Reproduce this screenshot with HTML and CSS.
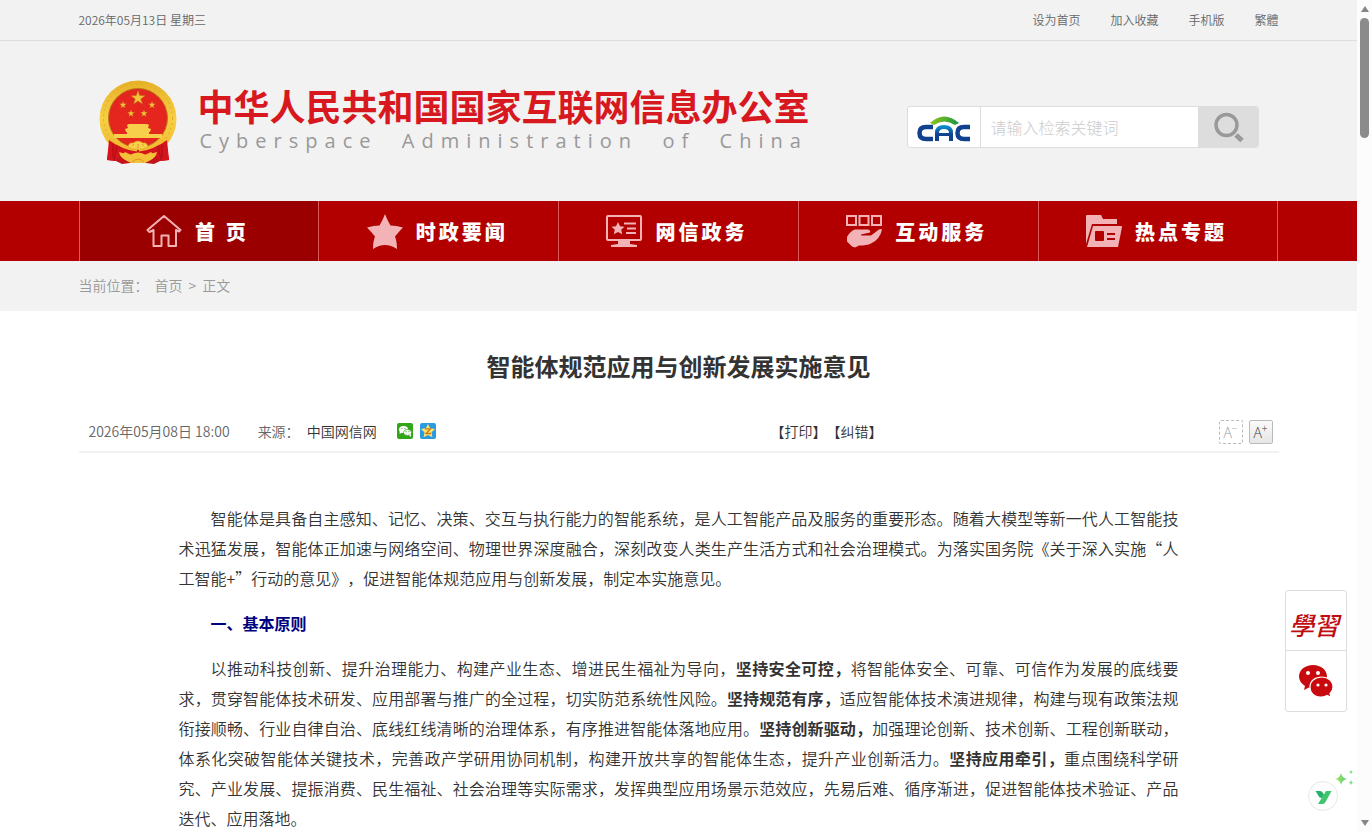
FILE: index.html
```html
<!DOCTYPE html>
<html lang="zh-CN">
<head>
<meta charset="utf-8">
<title>智能体规范应用与创新发展实施意见</title>
<meta name="viewport" content="width=device-width, initial-scale=1">
<link rel="stylesheet" href="styles.css">
</head>
<body>
<div class="window">
<div class="page">
  <div class="topbar">
    <div class="container topbar-row">
      <span>2026年05月13日 星期三</span>
      <div class="topbar-links">
        <a href="#">设为首页</a>
        <a href="#">加入收藏</a>
        <a href="#">手机版</a>
        <a href="#" lang="zh-TW">繁體</a>
      </div>
    </div>
  </div>

  <header class="header container">
    <a class="brand" href="#">
      <svg class="emblem" viewBox="0 0 78 84" aria-hidden="true">
        <defs>
          <linearGradient id="gold" x1="0" y1="0" x2="0" y2="1">
            <stop offset="0" stop-color="#e6b127"/><stop offset=".5" stop-color="#f7cf45"/><stop offset="1" stop-color="#efb82c"/>
          </linearGradient>
          <path id="star" d="M0-10 2.3-3.2 9.5-3.1 3.7 1.2 5.9 8.1 0 4-5.9 8.1-3.7 1.2-9.5-3.1-2.3-3.2z"/>
        </defs>
        <path d="M12 54 8 80l9 1 6 3 16-2 16 2 6-3 9-1-4-26z" fill="#c3121b"/>
        <circle cx="39" cy="39" r="38.500" fill="url(#gold)"/>
        <circle cx="39" cy="38" r="34.500" fill="none" stroke="#e2aa28" stroke-width="1" stroke-dasharray="2 3"/>
        <circle cx="39" cy="38" r="29.500" fill="#e4261f" stroke="#b9781a" stroke-width="1"/>
        <g fill="#f4c33b" stroke="#b86c16" stroke-width=".6">
          <use href="#star" transform="translate(39 18) scale(.75)"/>
          <use href="#star" transform="translate(24 25) scale(.37)"/>
          <use href="#star" transform="translate(53 25) scale(.37)"/>
          <use href="#star" transform="translate(32 33.500) scale(.37)"/>
          <use href="#star" transform="translate(45 33.500) scale(.37)"/>
        </g>
        <g fill="#f8cf4b">
          <path d="m28 45 2-1h18l2 1-1 3H29z"/>
          <path d="m26 49 3-1h20l3 1-1 3H27z"/>
          <path d="M28 52h22v2h13v4H15v-4h13z"/>
        </g>
        <path d="M10 60q11 9 29 10 18-1 29-10l2 20-9 1-9-9-13 6-13-6-9 9-9-1z" fill="#d5141b"/>
        <path d="M14 59q8 9 24 11M64 59q-8 9-24 11" stroke="#f2bd32" stroke-width="3" fill="none"/>
        <path d="M29 67q1-5 5-4 5-4 10 0 4-1 5 4-5 3-10 2-5 1-10-2z" fill="#f9d04a" stroke="#d98c1c" stroke-width=".5"/>
        <path d="M20 72q6 2 11 3 8-5 16 0 5-1 11-3-1 6-8 9l-4 2H32l-4-2q-7-3-8-9z" fill="#f4c23a"/>
        <path d="M33 82q6-6 12 0M33 66l2-2m4 4v-4m6 2-2-2" fill="none" stroke="#d38b1b" stroke-width=".8"/>
        <path d="M14 64v14m4-12-3 14m48-16v14m-4-12 3 14" stroke="#8d0c12" fill="none" opacity=".6"/>
      </svg>
      <span class="brand-text">
        <span class="brand-cn">中华人民共和国国家互联网信息办公室</span>
        <span class="brand-en" lang="en">Cyberspace&nbsp; Administration&nbsp; of&nbsp; China</span>
      </span>
    </a>
    <form class="search">
      <span class="search-logo">
        <svg viewBox="0 0 54 26" width="54" height="26" role="img" aria-label="CAC">
          <defs>
            <linearGradient id="arc"><stop offset="0" stop-color="#8cc220"/><stop offset=".5" stop-color="#5bb02c"/><stop offset="1" stop-color="#16944a"/></linearGradient>
            <linearGradient id="blue" x1="0" y1="0" x2="0" y2="1"><stop offset="0" stop-color="#0b9bd8"/><stop offset=".6" stop-color="#10418f"/></linearGradient>
          </defs>
          <path d="M13 7q14-13 29 0l-4 2q-11-7-21 0z" fill="url(#arc)"/>
          <path d="M16 11H9q-6.500 0-6.500 6T9 23h7" fill="none" stroke="#10418f" stroke-width="4.500"/>
          <path d="M53 11h-6q-6.500 0-6.500 6t6.500 6h6" fill="none" stroke="#10418f" stroke-width="4.500"/>
          <path d="M18 25v-8q0-8 9-8t9 8v8h-4v-5H22v5zm4-8h10q0-4-5-4t-5 4z" fill="url(#blue)" fill-rule="evenodd"/>
        </svg>
      </span>
      <input type="text" class="search-input" placeholder="请输入检索关键词" aria-label="请输入检索关键词">
      <button type="button" class="search-button" aria-label="搜索">
        <svg viewBox="0 0 32 32" width="32" height="32"><circle cx="14.500" cy="14" r="10.500" fill="none" stroke="#999" stroke-width="3.500"/><path d="m24 24 6 5.500" stroke="#999" stroke-width="5"/></svg>
      </button>
    </form>
  </header>

  <nav class="nav">
    <div class="container nav-row">
      <a class="nav-item active" href="#">
        <svg class="nav-icon" viewBox="0 0 36 36"><path d="M1.500 17 18 3l16.500 14-1.500 1.500-3-1.500V33h-7.500V22.500h-7V33H7.500V17l-4 2z" fill="none" stroke="#f3b3b6" stroke-width="2" stroke-linejoin="round"/></svg>
        <span>首 页</span>
      </a>
      <a class="nav-item" href="#">
        <svg class="nav-icon" viewBox="0 0 36 36"><path d="M18 1c1.500 4 3.500 8 5.500 11.500 4 .2 8 .8 12.500 2-3 3-5.500 6-8 9 1.500 4 2 8 2 12.500-4-2.500-8-4-12-4s-8 1.500-12 4c0-4.500.5-8.500 2-12.500-2.500-3-5-6-8-9 4.500-1.200 8.500-1.800 12.500-2C14.500 9 16.500 5 18 1z" fill="#f3b3b6"/></svg>
        <span>时政要闻</span>
      </a>
      <a class="nav-item" href="#">
        <svg class="nav-icon" viewBox="0 0 36 36"><rect x="1" y="3" width="34" height="24" rx="1" fill="none" stroke="#f3b3b6" stroke-width="2"/><path d="M12 27h12v4l7 1v2H5v-2l7-1zM12 9l2 4.200 4.500.500-3.300 3 1 4.500L12 19l-4.200 2.200 1-4.500-3.300-3 4.500-.5z" fill="#f3b3b6"/><path d="M18 10.500h12M21 15.500h9M20 20h10" stroke="#f3b3b6" stroke-width="2"/></svg>
        <span>网信政务</span>
      </a>
      <a class="nav-item" href="#">
        <svg class="nav-icon" viewBox="0 0 36 36"><path d="M1 3h9v9H1zM13.500 3h9v9h-9zM26 3h9v9h-9z" fill="none" stroke="#f3b3b6" stroke-width="2"/><path d="M1 24q3-6 8-7.500h13q3 1 2 3l-9 2v1h10l8-6q2-1 3 0-2 10-11 14-4 2-12 2l-4 2-3-1-5-5z" fill="#f3b3b6"/></svg>
        <span>互动服务</span>
      </a>
      <a class="nav-item" href="#">
        <svg class="nav-icon" viewBox="0 0 36 36"><path d="M0 3q0-1 1-1h14l2 4h14v5H6L0 31zM7 13h28q1 0 1 1l-4 20H1zM9 19v8q0 1 1 1h7q1 0 1-1v-8q0-1-1-1h-7q-1 0-1 1zM21 20v2h8v-2zM21 25v2h8v-2z" fill="#f3b3b6" fill-rule="evenodd"/></svg>
        <span>热点专题</span>
      </a>
    </div>
  </nav>

  <div class="crumbs">
    <div class="container crumbs-row">
      <span>当前位置：</span><a href="#">首页</a><span>&gt;</span><a href="#">正文</a>
    </div>
  </div>

  <main class="container">
    <h1 class="title">智能体规范应用与创新发展实施意见</h1>
    <div class="meta">
      <div class="meta-left">
        <span>2026年05月08日 18:00</span>
        <span class="source">来源： <a href="#">中国网信网</a></span>
        <span class="share">
          <button type="button" aria-label="微信">
            <svg viewBox="0 0 16 16" width="16" height="16"><rect width="16" height="16" rx="2" fill="#32a518"/><ellipse cx="6.500" cy="6.500" rx="4.500" ry="3.500" fill="#fff"/><path d="m3 8-.5 3L6 9z" fill="#fff"/><ellipse cx="10.500" cy="9.500" rx="4" ry="3" fill="#fff" stroke="#32a518" stroke-width=".7"/><path d="m12 12 2 2v-3z" fill="#fff"/><path d="M4.500 5.500h1m2 0h1m0 3.200h1m2 0h1" stroke="#32a518"/></svg>
          </button>
          <button type="button" aria-label="QQ空间">
            <svg viewBox="0 0 16 16" width="16" height="16"><rect width="16" height="16" rx="2" fill="#2b9be0"/><path d="m8 1 2.100 4.300 5 .700-3.600 3.300.9 4.900L8 12l-4.400 2.200.9-4.900L.9 6l5-.7z" fill="#ffe36b"/><path d="M5 5.800h5.500L6 10.500h5" fill="none" stroke="#d07a12" stroke-width="1.300"/></svg>
          </button>
        </span>
      </div>
      <div class="meta-actions"><a href="#">【打印】</a><a href="#">【纠错】</a></div>
      <div class="zoomers">
        <button type="button" class="size-button off">A<sup>−</sup></button>
        <button type="button" class="size-button">A<sup>+</sup></button>
      </div>
    </div>
    <article class="article">
      <p>智能体是具备自主感知、记忆、决策、交互与执行能力的智能系统，是人工智能产品及服务的重要形态。随着大模型等新一代人工智能技术迅猛发展，智能体正加速与网络空间、物理世界深度融合，深刻改变人类生产生活方式和社会治理模式。为落实国务院《关于深入实施“人工智能+”行动的意见》，促进智能体规范应用与创新发展，制定本实施意见。</p>
      <h2>一、基本原则</h2>
      <p>以推动科技创新、提升治理能力、构建产业生态、增进民生福祉为导向，<strong>坚持安全可控，</strong>将智能体安全、可靠、可信作为发展的底线要求，贯穿智能体技术研发、应用部署与推广的全过程，切实防范系统性风险。<strong>坚持规范有序，</strong>适应智能体技术演进规律，构建与现有政策法规衔接顺畅、行业自律自治、底线红线清晰的治理体系，有序推进智能体落地应用。<strong>坚持创新驱动，</strong>加强理论创新、技术创新、工程创新联动，体系化突破智能体关键技术，完善政产学研用协同机制，构建开放共享的智能体生态，提升产业创新活力。<strong>坚持应用牵引，</strong>重点围绕科学研究、产业发展、提振消费、民生福祉、社会治理等实际需求，发挥典型应用场景示范效应，先易后难、循序渐进，促进智能体技术验证、产品迭代、应用落地。</p>
    </article>
  </main>
</div>

<div class="scrollbar" aria-hidden="true">
  <span class="arrow up"></span>
  <span class="thumb"></span>
  <span class="arrow down"></span>
</div>
</div>

<aside class="floating">
  <a class="study" href="#" lang="zh-TW">學習</a>
  <a href="#" aria-label="微信">
    <svg viewBox="0 0 34 32" width="34" height="32"><path d="M14 0c8 0 14 5 14 11.500S22 23 14 23l-4-.5L5 25l1-4Q0 17 0 11.500C0 5 6 0 14 0z" fill="#c80a0f"/><path d="M23 12c6 0 11 4 11 10 0 3-1 5-3 6.500l1 3.500-4-1.500c-8 4-17 0-17-8.500 0-6 5-10 12-10z" fill="#c80a0f" stroke="#fff" stroke-width="1.200"/><g fill="#fff"><circle cx="9" cy="8" r="2"/><circle cx="19" cy="8" r="2"/><circle cx="19" cy="20" r="1.600"/><circle cx="27" cy="20" r="1.600"/></g></svg>
  </a>
</aside>

<button class="assistant" type="button" aria-label="助手">
  <svg viewBox="0 0 48 48" width="48" height="48"><defs><linearGradient id="spark"><stop offset="0" stop-color="#b5e36c"/><stop offset="1" stop-color="#4fcf70"/></linearGradient></defs><circle cx="17" cy="29" r="14.500" fill="#fff" stroke="#e6e6e6"/><path d="M9.500 24H14q2 0 3 2l1 2-2 3q-3 0-4-3z" fill="#27b06b"/><path d="M20 24h5.500l-6 11q-1 2-3 2H12z" fill="#3fc56b"/><path d="M35 6q1 5 6 6-5 1-6 6-1-5-6-6 5-1 6-6z" fill="url(#spark)"/><path d="M45 13q.5 2 2 2.500-1.500.5-2 2.500-.5-2-2-2.500 1.500-.5 2-2.500zM45 3q.5 2 2 2-1.500.5-2 2-.5-1.500-2-2 1.500 0 2-2z" fill="#7bdc86"/></svg>
</button>
</body>
</html>
```

FILE: styles.css
```css
* { box-sizing: border-box; }

body {
  margin: 0;
  color: #333;
  background: #fff;
  font-family: "Noto Sans CJK SC", "Noto Sans", sans-serif;
  font-size: 14px;
  font-weight: 350;
  text-spacing-trim: space-all;
}

a { color: inherit; text-decoration: none; }
button { padding: 0; border: 0; background: none; font: inherit; cursor: pointer; }
svg { display: block; }

.window { display: flex; height: 100vh; overflow: hidden; }
.page {
  flex: 1;
  min-width: 0;
  overflow: hidden;
  background: linear-gradient(#f2f2f2 310px, #fff 310px);
}
.container { width: 100%; max-width: 1200px; margin: 0 auto; }

/* Top strip */
.topbar {
  background: #f2f2f2;
  border-bottom: 1px solid #ddd;
  color: #666;
  font-size: 12px;
  line-height: 40px;
}
.topbar-row { display: flex; justify-content: space-between; }
.topbar-links { display: flex; gap: 30px; }

/* Header */
.header {
  display: flex;
  align-items: center;
  justify-content: space-between;
  height: 160px;
  padding: 2px 20px 0;
}
.brand { display: flex; align-items: center; gap: 21px; white-space: nowrap; }
.emblem { width: 78px; height: 84px; }
.brand-text { display: flex; flex-direction: column; padding-bottom: 4px; }
.brand-cn { color: #d7191f; font-size: 36px; font-weight: 700; line-height: 40px; }
.brand-en {
  padding: 2px 0 0 2px;
  color: #999;
  font-family: "Open Sans", sans-serif;
  font-size: 20px;
  font-weight: 400;
  line-height: 28px;
  letter-spacing: 7px;
}

.search {
  display: flex;
  width: 352px;
  height: 42px;
  margin-top: 10px;
  overflow: hidden;
  background: #fff;
  border: 1px solid #ddd;
  border-radius: 3px;
}
.search-logo {
  display: flex;
  align-items: center;
  justify-content: center;
  width: 73px;
  padding-top: 4px;
  border-right: 1px solid #ddd;
}
.search-input {
  flex: 1;
  min-width: 0;
  padding: 0 10px;
  border: 0;
  outline: 0;
  color: #333;
  font: inherit;
  font-size: 16px;
  font-weight: 300;
}
.search-input::placeholder { color: #ccc; opacity: 1; }
.search-button {
  display: flex;
  align-items: center;
  justify-content: center;
  width: 60px;
  background: #ddd;
}

/* Navigation */
.nav { background: #b20000; }
.nav-row { display: flex; border-left: 1px solid #dc5a5a; }
.nav-item {
  display: flex;
  flex: 1;
  align-items: center;
  justify-content: center;
  gap: 13px;
  height: 60px;
  padding-right: 3px;
  border-right: 1px solid #dc5a5a;
  color: #fff;
  font-size: 20px;
  font-weight: 900;
  letter-spacing: 3px;
  white-space: nowrap;
}
.nav-item.active { background: #9b0000; }
.nav-icon { width: 36px; height: 36px; }

.crumbs { padding-bottom: 2px; color: #999; line-height: 48px; background: #f2f2f2; }
.crumbs-row { display: flex; gap: 6px; }

/* Article head */
.title {
  margin: 0;
  padding: 37px 0 26px;
  font-size: 24px;
  font-weight: 700;
  line-height: 36px;
  text-align: center;
}
.meta {
  display: grid;
  grid-template-columns: 58% 1fr auto;
  align-items: center;
  height: 43px;
  border-bottom: 2px solid #f2f2f2;
}
.meta-left { display: flex; align-items: center; gap: 28px; padding-left: 10px; color: #666; }
.source a { margin-left: 4px; color: #333; }
.share { display: flex; gap: 7px; margin-left: -8px; }
.meta-actions { margin-left: -4px; }
.zoomers { display: flex; gap: 6px; padding: 3px 6px 0 0; }
.size-button {
  display: flex;
  align-items: center;
  justify-content: center;
  width: 24px;
  height: 24px;
  border: 1px solid #bbb;
  border-radius: 2px;
  background: linear-gradient(#fafafa, #e6e6e6);
  color: #333;
  font-family: "Open Sans", sans-serif;
  font-size: 14px;
}
.size-button sup { padding-bottom: 8px; font-size: 10px; line-height: 1; }
.size-button.off { border-style: dashed; background: #fff; color: #999; }

.article {
  padding: 50px 100px 0;
  font-size: 16px;
  line-height: 30px;
  text-align: justify;
}
.article p, .article h2 { margin: 0 0 15px; text-indent: 2em; }
.article h2 { color: #000080; font-size: 16px; font-weight: 700; }

/* Window scrollbar */
.scrollbar {
  display: flex;
  flex: none;
  flex-direction: column;
  align-items: center;
  gap: 6px;
  width: 15px;
  padding: 6px 0 6px;
  background: #fcfcfc;
}
.arrow { border: 4px solid transparent; }
.arrow.up { border-top: 0; border-bottom: 6px solid #858585; }
.arrow.down { margin-top: auto; border-bottom: 0; border-top: 6px solid #858585; }
.thumb { width: 9px; height: 120px; border-radius: 5px; background: #8b8b8b; }

/* Floating tools */
.floating {
  position: fixed;
  right: 25px;
  bottom: 120px;
  width: 62px;
  background: #fff;
  border: 1px solid #ddd;
  border-radius: 3px;
}
.floating a {
  display: flex;
  align-items: center;
  justify-content: center;
  height: 60px;
}
.floating .study {
  padding: 6px 4px 0 0;
  border-bottom: 1px solid #ddd;
  color: #c00d12;
  font-family: "Noto Sans CJK TC", sans-serif;
  font-size: 25px;
  font-style: italic;
  font-weight: 500;
}
.assistant { position: fixed; right: 18px; bottom: 17px; }
```
